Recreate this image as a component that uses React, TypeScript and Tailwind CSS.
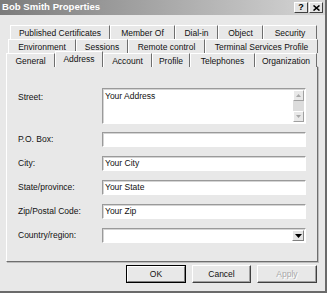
import React from 'react';

const rows: { left: number; tabs: [string, number][] }[] = [
  { left: 10, tabs: [['Published Certificates', 100], ['Member Of', 65], ['Dial-in', 43], ['Object', 45], ['Security', 54]] },
  { left: 8, tabs: [['Environment', 68], ['Sessions', 52], ['Remote control', 77], ['Terminal Services Profile', 113]] },
  { left: 6, tabs: [['General', 49], ['Address', 48], ['Account', 49], ['Profile', 38], ['Telephones', 65], ['Organization', 62]] },
];

const Field = ({ label, value, combo }: { label: string; value?: string; combo?: boolean }) => (
  <div className="flex items-center h-[15px]">
    <span className="w-[84px] shrink-0">{label}</span>
    <div className="relative w-[204px] h-[15px] bg-white border border-t-[#9a9a9a] border-l-[#9a9a9a] border-r-white border-b-white shadow-[inset_1px_1px_0_#d4d4d4] flex items-center pl-[2px]">
      {value}
      {combo && (
        <div className="absolute right-[1px] top-[1px] w-[12px] h-[11px] bg-[#e4e4e4] border border-t-white border-l-white border-r-[#808080] border-b-[#808080] flex items-center justify-center">
          <svg width="7" height="4" viewBox="0 0 7 4"><path d="M0 0h7L3.5 4z" fill="#000" /></svg>
        </div>
      )}
    </div>
  </div>
);

export default function App() {
  return (
    <div className="w-[327px] h-[293px] bg-[#e8e8e8] relative overflow-hidden font-['Liberation_Sans',Arial,sans-serif] text-[8.5px] text-[#111] border-r-2 border-b-2 border-r-[#6a6a6a] border-b-[#6a6a6a]">
      <div className="h-[15px] flex items-center justify-between bg-gradient-to-r from-[#7c7c7c] to-[#d6d6d6] pl-[2px] pr-[2px]">
        <span className="text-white font-bold text-[9.6px]">Bob Smith Properties</span>
        <div className="flex gap-[1px]">
          {['?', '×'].map((c) => (
            <div key={c} className="w-[14px] h-[11px] bg-[#e4e4e4] border border-t-white border-l-white border-r-[#404040] border-b-[#404040] flex items-center justify-center font-bold text-[9px] leading-none text-black">
              {c === '×' ? <svg width="7" height="6" viewBox="0 0 7 6"><path d="M0.5 0.5l6 5M6.5 0.5l-6 5" stroke="#000" strokeWidth="1.6" /></svg> : c}
            </div>
          ))}
        </div>
      </div>

      <div className="mt-[10px] flex flex-col">
        {rows.map((r, ri) => (
          <div key={ri} className={`flex ${ri === 2 ? 'h-[13px] relative z-10' : 'h-[14px]'}`} style={{ marginLeft: r.left }}>
            {r.tabs.map(([t, w]) => {
              const sel = t === 'Address';
              return (
                <div
                  key={t}
                  className={
                    sel
                      ? 'relative -top-[2px] h-[16px] bg-[#e8e8e8] border-t border-l border-white border-r border-r-[#6e6e6e] flex items-start justify-center pt-[1px]'
                      : 'h-[14px] bg-[#e8e8e8] border-t border-l border-white border-r border-r-[#6e6e6e] flex items-start justify-center pt-[1px]'
                  }
                  style={{ width: w }}
                >
                  {t}
                </div>
              );
            })}
          </div>
        ))}
      </div>

      <div className="ml-[6px] w-[312px] h-[196px] border border-t-white border-l-white border-r-[#6e6e6e] border-b-[#6e6e6e] shadow-[1px_1px_0_#bcbcbc] pt-[21px] pl-[11px]">
        <div className="flex items-start h-[36px]">
          <span className="w-[84px] shrink-0 mt-[3px]">Street:</span>
          <div className="relative w-[204px] h-[36px] bg-white border border-t-[#9a9a9a] border-l-[#9a9a9a] border-r-white border-b-white shadow-[inset_1px_1px_0_#d4d4d4] pl-[2px] pt-[1px]">
            Your Address
            <div className="absolute right-[1px] top-[1px] bottom-[1px] w-[11px] flex flex-col bg-[#dcdcdc]">
              <div className="h-[11px] bg-[#e8e8e8] border border-t-white border-l-white border-r-[#a0a0a0] border-b-[#a0a0a0] flex items-center justify-center">
                <svg width="5" height="3" viewBox="0 0 5 3"><path d="M0 3h5L2.5 0z" fill="#a8a8a8" /></svg>
              </div>
              <div className="flex-1" />
              <div className="h-[11px] bg-[#e8e8e8] border border-t-white border-l-white border-r-[#a0a0a0] border-b-[#a0a0a0] flex items-center justify-center">
                <svg width="5" height="3" viewBox="0 0 5 3"><path d="M0 0h5L2.5 3z" fill="#a8a8a8" /></svg>
              </div>
            </div>
          </div>
        </div>
        <div className="flex flex-col gap-[9px] mt-[8px]">
          <Field label="P.O. Box:" />
          <Field label="City:" value="Your City" />
          <Field label="State/province:" value="Your State" />
          <Field label="Zip/Postal Code:" value="Your Zip" />
          <Field label="Country/region:" combo />
        </div>
      </div>

      <div className="flex justify-end gap-[6px] pr-[8px] mt-[3px]">
        <div className="w-[60px] h-[18px] border border-black">
          <div className="w-full h-full bg-[#e8e8e8] border border-t-white border-l-white border-r-[#808080] border-b-[#808080] flex items-center justify-center">OK</div>
        </div>
        <div className="w-[59px] h-[18px] bg-[#e8e8e8] border border-t-white border-l-white border-r-[#404040] border-b-[#404040] shadow-[inset_-1px_-1px_0_#a0a0a0] flex items-center justify-center">Cancel</div>
        <div className="w-[60px] h-[18px] bg-[#e8e8e8] border border-t-white border-l-white border-r-[#404040] border-b-[#404040] shadow-[inset_-1px_-1px_0_#a0a0a0] flex items-center justify-center text-[#a8a8a8] [text-shadow:1px_1px_0_#fff]">Apply</div>
      </div>
    </div>
  );
}
